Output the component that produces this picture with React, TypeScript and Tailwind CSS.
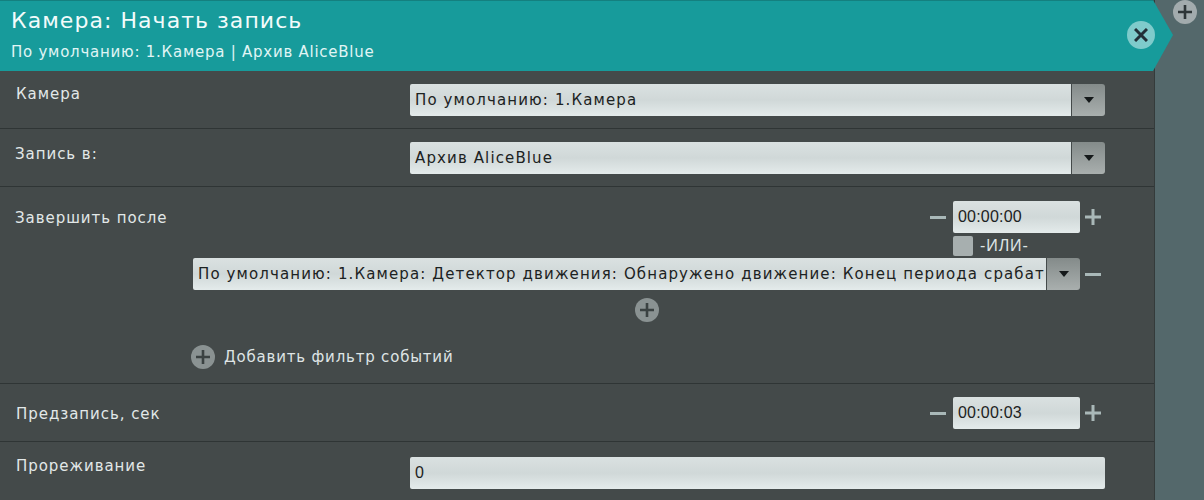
import { ReactNode } from "react";

const font = "font-['DejaVu_Sans',sans-serif]";
const fieldBg = "bg-gradient-to-b from-[#dae1e1] via-[#d0d8d8] to-[#e4ebeb]";
const labelText = "text-[15px] leading-[18px] tracking-[0.95px] text-[#e2e8e8]";

function CircleButton({ size = 24, className = "" }: { size?: number; className?: string }) {
  return (
    <svg width={size} height={size} viewBox="0 0 24 24" className={`shrink-0 ${className}`}>
      <circle cx="12" cy="12" r="12" fill="#8a9292" />
      <path d="M12 5v14M5 12h14" stroke="#3b4242" strokeWidth="2.6" />
    </svg>
  );
}

function Minus({ className = "" }: { className?: string }) {
  return <div className={`h-[3px] w-4 bg-[#a9b8b8] ${className}`} />;
}

function Plus() {
  return (
    <svg width="16" height="16" viewBox="0 0 16 16" className="shrink-0">
      <path d="M8 0v16M0 8h16" stroke="#a9b8b8" strokeWidth="3" />
    </svg>
  );
}

function Select({ value, className = "" }: { value: string; className?: string }) {
  return (
    <div className={`flex h-8 ${className}`}>
      <div
        className={`flex min-w-0 flex-1 items-center overflow-hidden whitespace-nowrap rounded-l-[2px] pl-[5px] text-[15px] tracking-[1.12px] text-[#1c2222] ${fieldBg}`}
      >
        {value}
      </div>
      <div className="ml-px flex w-[33px] items-center justify-center rounded-r-[3px] bg-gradient-to-b from-[#848b8a] to-[#a9afae]">
        <div className="h-0 w-0 border-x-[5px] border-t-[6px] border-x-transparent border-t-[#15191a]" />
      </div>
    </div>
  );
}

function TimeField({ value }: { value: string }) {
  return (
    <div className="flex items-center">
      <Minus />
      <div
        className={`ml-[7px] flex h-8 w-[127px] items-center rounded-[2px] pl-[5px] font-['Liberation_Sans',sans-serif] text-[16px] tracking-[0.2px] text-[#1c2222] ${fieldBg}`}
      >
        {value}
      </div>
      <div className="ml-[5px]">
        <Plus />
      </div>
    </div>
  );
}

function Row({ label, children, className = "" }: { label: string; children?: ReactNode; className?: string }) {
  return (
    <div className={`relative border-b border-[#2f3535] ${className}`}>
      <div className={labelText}>{label}</div>
      {children}
    </div>
  );
}

export default function App() {
  return (
    <div className={`flex h-[500px] w-[1204px] overflow-hidden bg-[#54686b] ${font}`}>
      <div className="relative h-full w-[1155px] shrink-0 border-r border-[#343b3b] bg-[#444a4a]">
        <div className="relative z-10 h-[71px] w-[1173px] border-t border-[#14807f] bg-[#179b9b] pl-[11px] pt-[6px] [clip-path:polygon(0_0,1153px_0,1173px_35px,1153px_71px,0_71px)]">
          <div className="text-[22px] leading-[28px] tracking-[1.05px] text-[#f2fbfb]">Камера: Начать запись</div>
          <div className="mt-[9px] text-[15px] leading-4 tracking-[0.75px] text-[#e0f5f5]">
            По умолчанию: 1.Камера | Архив AliceBlue
          </div>
          <div className="absolute left-[1127px] top-[20px] flex h-7 w-7 items-center justify-center rounded-full bg-[#7fcbcb]">
            <svg width="14" height="14" viewBox="0 0 14 14">
              <path d="M1 1l12 12M13 1L1 13" stroke="#223038" strokeWidth="3" />
            </svg>
          </div>
        </div>

        <Row label="Камера" className="h-[58px] pl-4 pt-[14px]">
          <Select value="По умолчанию: 1.Камера" className="absolute left-[410px] top-[13px] w-[695px]" />
        </Row>

        <Row label="Запись в:" className="h-[58px] pl-[15px] pt-[16px]">
          <Select value="Архив AliceBlue" className="absolute left-[410px] top-[13px] w-[695px]" />
        </Row>

        <div className="flex h-[197px] flex-col border-b border-[#2f3535] pt-[14px]">
          <div className="flex justify-between pl-[15px] pr-[53px]">
            <div className={`pt-[8px] ${labelText}`}>Завершить после</div>
            <TimeField value="00:00:00" />
          </div>
          <div className="ml-[953px] mt-[3px] flex h-5 items-center">
            <div className="h-5 w-5 rounded-[2px] bg-[#a7afaf]" />
            <span className="ml-[7px] font-['Liberation_Sans',sans-serif] text-[16px] tracking-[0.9px] text-[#dfe5e5]">-ИЛИ-</span>
          </div>
          <div className="ml-[193px] mt-[2px] flex items-center">
            <Select
              value="По умолчанию: 1.Камера: Детектор движения: Обнаружено движение: Конец периода срабат"
              className="w-[887px]"
            />
            <Minus className="ml-[5px]" />
          </div>
          <CircleButton className="ml-[635px] mt-2" />
          <div className="ml-[191px] mt-[23px] flex items-center">
            <CircleButton />
            <span className="ml-[9px] text-[15px] tracking-[0.8px] text-[#dfe5e5]">Добавить фильтр событий</span>
          </div>
        </div>

        <div className="flex h-[58px] items-center justify-between border-b border-[#2f3535] pl-4 pr-[53px] pt-px">
          <div className={`pt-[2px] ${labelText}`}>Предзапись, сек</div>
          <TimeField value="00:00:03" />
        </div>

        <div className="relative flex pl-4 pt-[15px]">
          <div className={`w-[394px] ${labelText}`}>Прореживание</div>
          <div
            className={`flex h-8 w-[695px] items-center rounded-[2px] pl-[5px] font-['Liberation_Sans',sans-serif] text-[16px] text-[#1c2222] ${fieldBg}`}
          >
            0
          </div>
        </div>
      </div>
      <div className="relative flex-1">
        <div className="absolute left-[18px] top-0">
          <svg width="24" height="24" viewBox="0 0 24 24">
            <circle cx="12" cy="12" r="12" fill="#a2abad" />
            <path d="M12 5v14M5 12h14" stroke="#2e3638" strokeWidth="2.6" />
          </svg>
        </div>
      </div>
    </div>
  );
}
